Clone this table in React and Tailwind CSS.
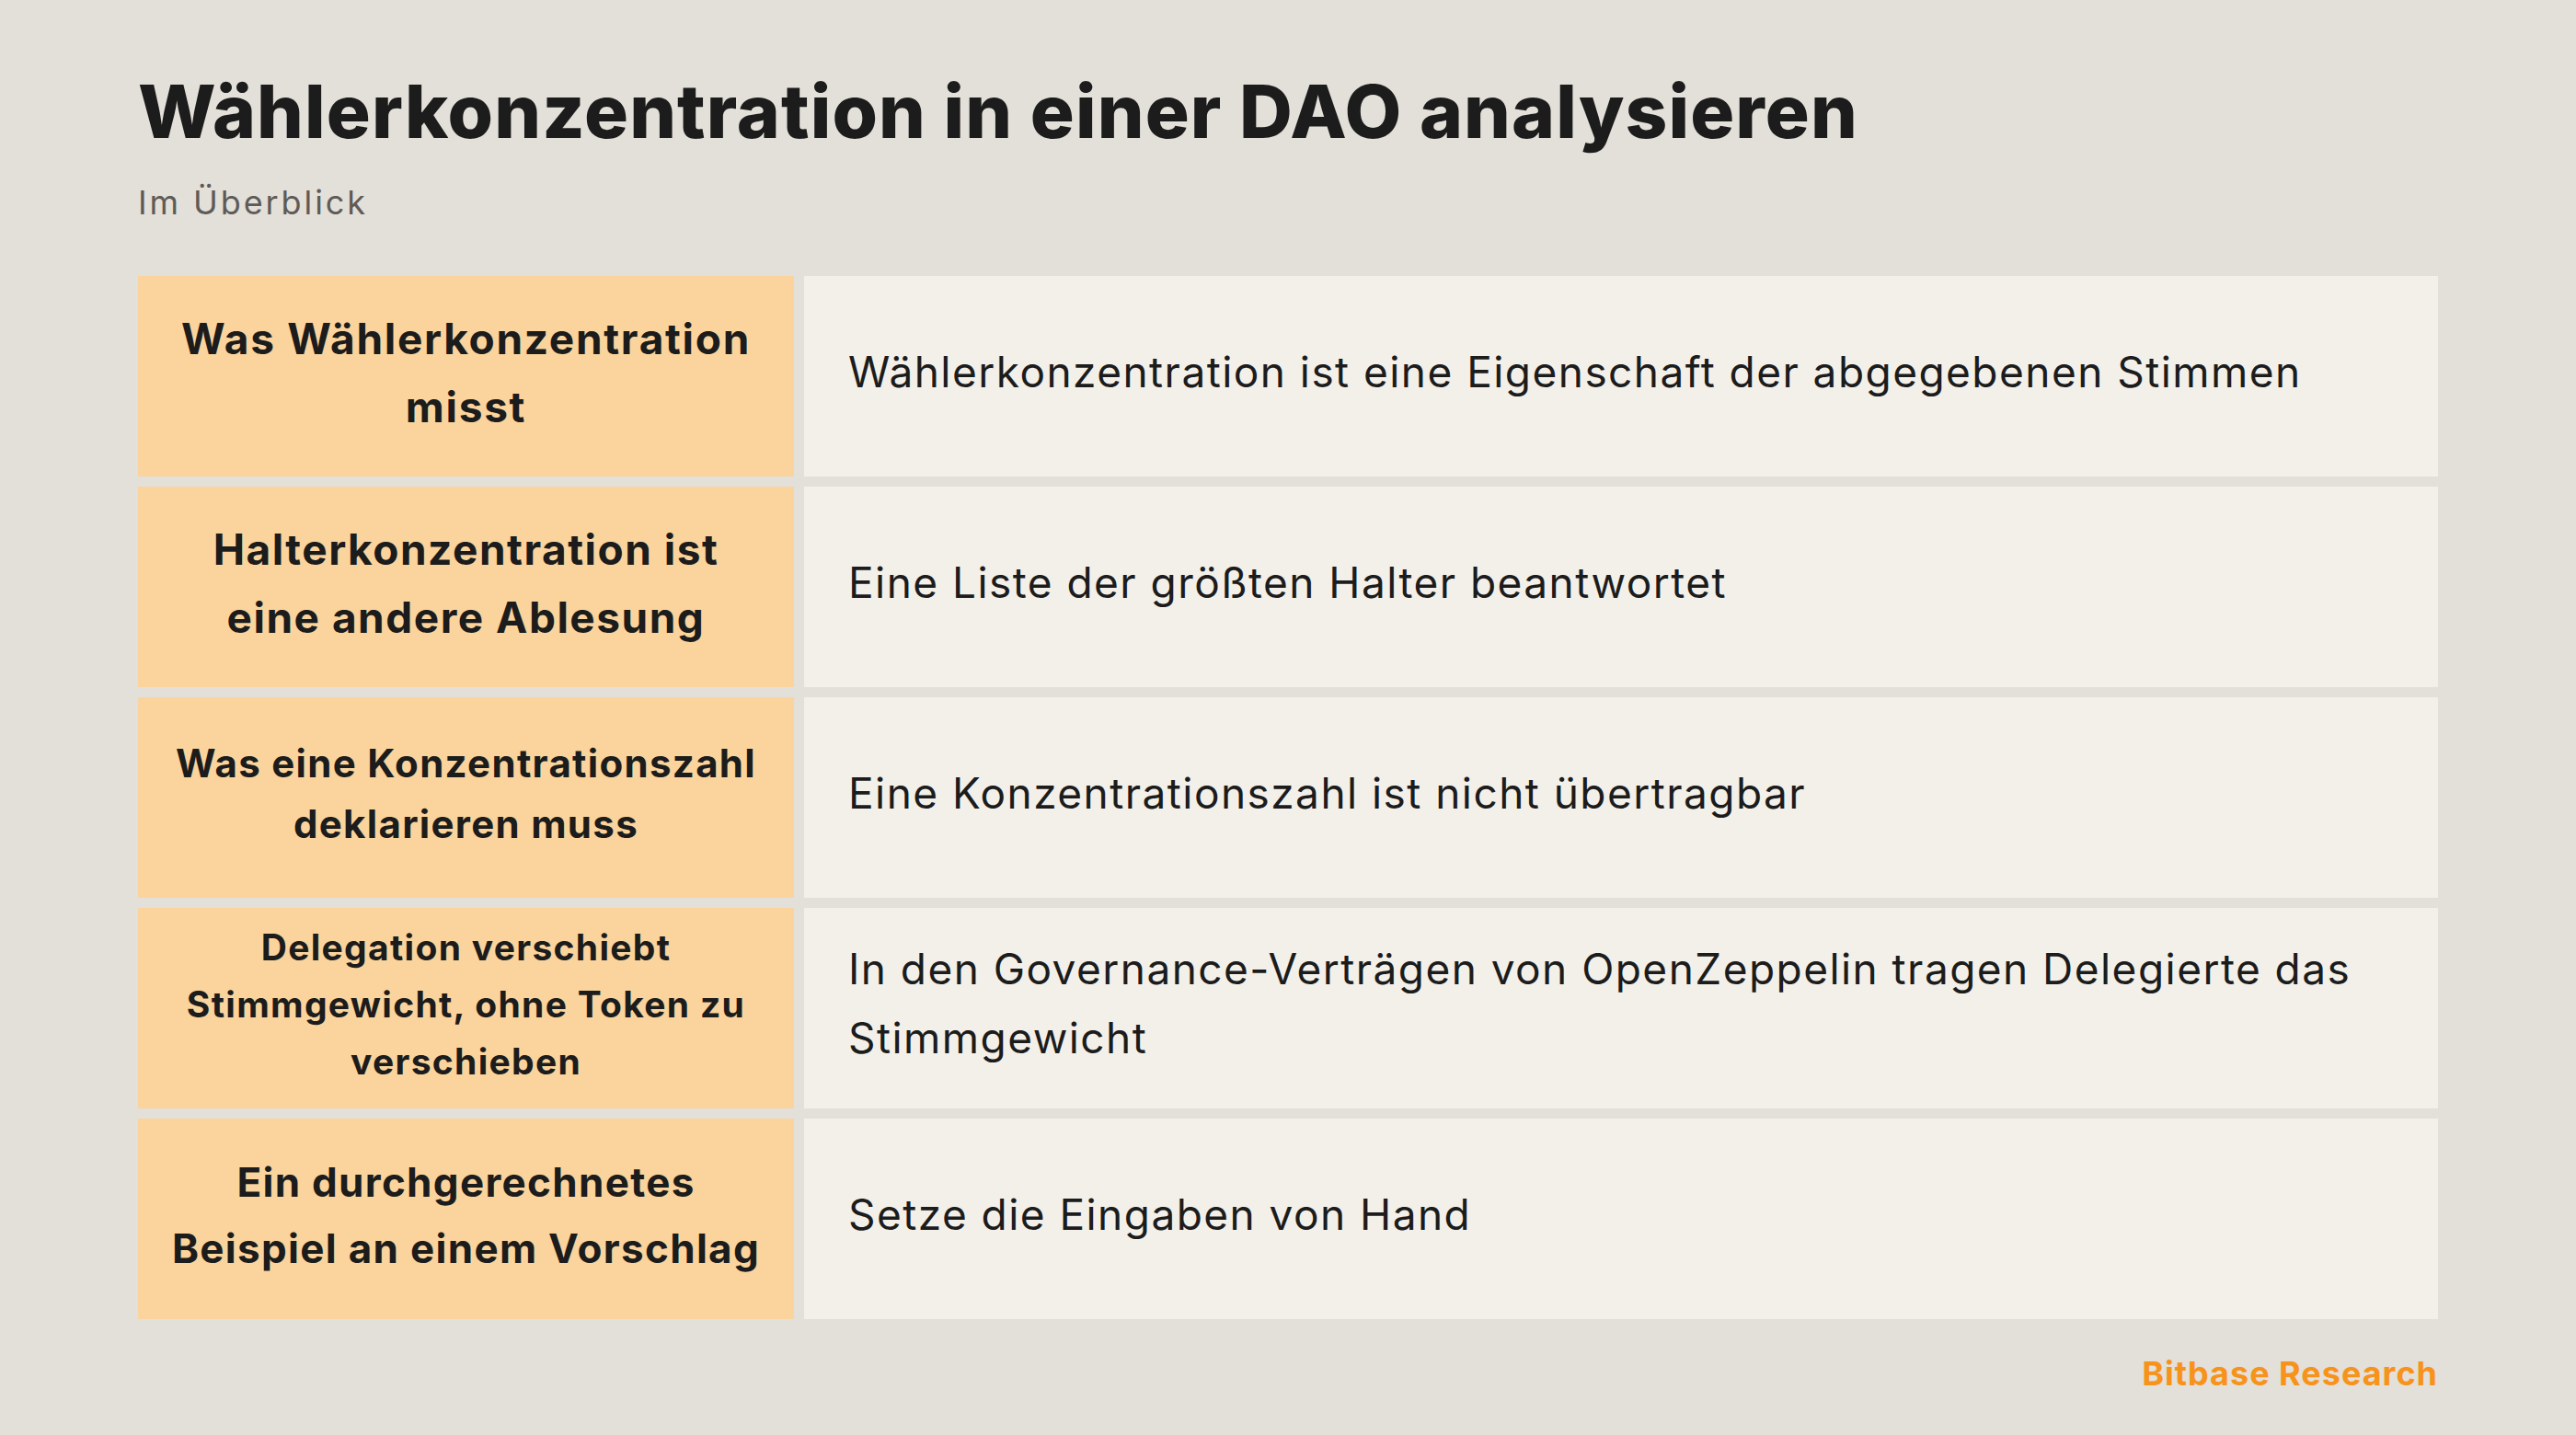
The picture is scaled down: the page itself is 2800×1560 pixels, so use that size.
const rows = [
  {
    left: ["Was Wählerkonzentration", "misst"],
    size: "text-[46px] leading-[74px] tracking-[1.7px]",
    right: ["Wählerkonzentration ist eine Eigenschaft der abgegebenen Stimmen"],
  },
  {
    left: ["Halterkonzentration ist", "eine andere Ablesung"],
    size: "text-[46px] leading-[74px] tracking-[1.5px]",
    right: ["Eine Liste der größten Halter beantwortet"],
  },
  {
    left: ["Was eine Konzentrationszahl", "deklarieren muss"],
    size: "text-[42px] leading-[66px] tracking-[1.3px]",
    right: ["Eine Konzentrationszahl ist nicht übertragbar"],
  },
  {
    left: ["Delegation verschiebt", "Stimmgewicht, ohne Token zu", "verschieben"],
    size: "text-[39px] leading-[62px] tracking-[1.3px]",
    right: [
      "In den Governance-Verträgen von OpenZeppelin tragen Delegierte das",
      "Stimmgewicht",
    ],
  },
  {
    left: ["Ein durchgerechnetes", "Beispiel an einem Vorschlag"],
    size: "text-[44px] leading-[72px] tracking-[1.3px]",
    right: ["Setze die Eingaben von Hand"],
  },
];

export default function App() {
  return (
    <div
      className="w-[2800px] h-[1560px] bg-[#e3dfd9] px-[150px] pt-[73px] text-[#1c1c1c]"
      style={{ fontFamily: "Inter, 'Noto Sans', sans-serif" }}
    >
      <h1 className="text-[80px] leading-[96px] font-extrabold tracking-[1.1px] whitespace-nowrap">
        Wählerkonzentration in einer DAO analysieren
      </h1>
      <p className="mt-[30px] text-[36px] leading-[42px] tracking-[2.9px] text-[#5e5b57]">
        Im Überblick
      </p>
      <div className="mt-[59px] grid grid-cols-[713px_1fr] auto-rows-[218px] gap-[11px]">
        {rows.map((r, i) => (
          <div key={i} className="contents">
            <div
              className={`bg-[#fad49c] flex flex-col items-center justify-center text-center font-bold px-[20px] pb-[8px] ${r.size}`}
            >
              {r.left.map((l, j) => (
                <span key={j} className="whitespace-nowrap">
                  {l}
                </span>
              ))}
            </div>
            <div className="bg-[#f3f0ea] flex flex-col justify-center pl-[48px] pr-[48px] pb-[10px] text-[46px] leading-[75px] tracking-[1.45px]">
              {r.right.map((l, j) => (
                <span key={j} className="whitespace-nowrap">
                  {l}
                </span>
              ))}
            </div>
          </div>
        ))}
      </div>
      <div className="mt-[37px] text-right text-[36px] leading-[44px] font-bold tracking-[1px] text-[#f7931a]">
        Bitbase Research
      </div>
    </div>
  );
}
